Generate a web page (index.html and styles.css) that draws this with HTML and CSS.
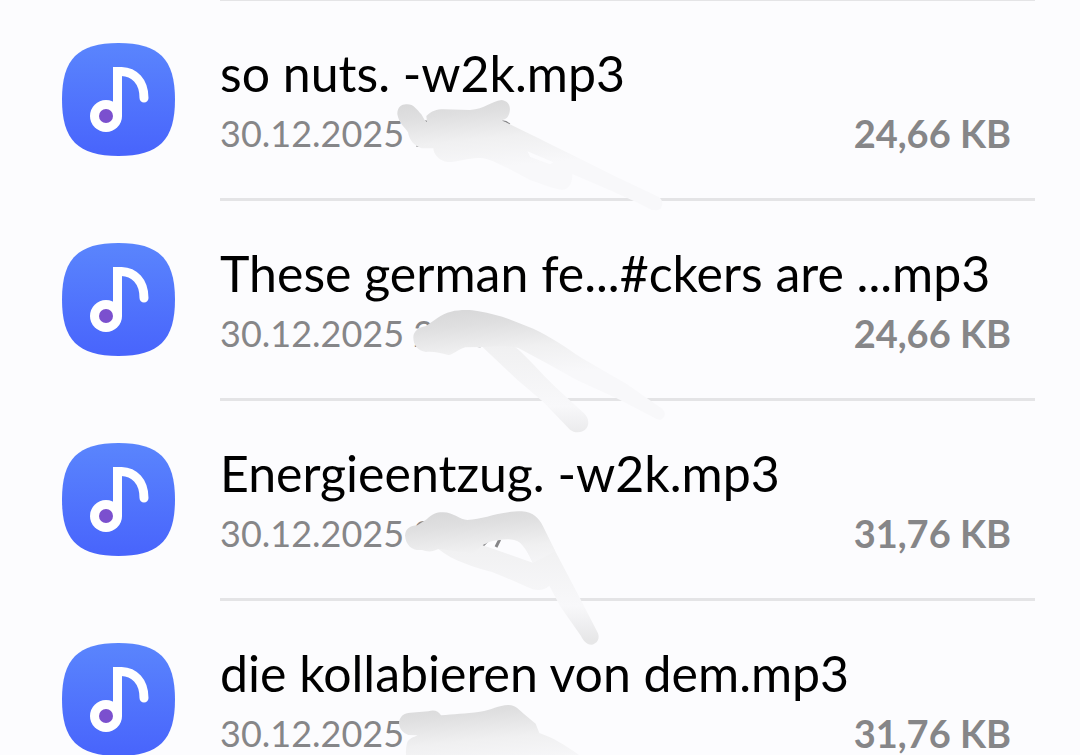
FILE: index.html
```html
<!DOCTYPE html>
<html lang="de">
<head>
	<meta charset="UTF-8">
	<meta name="viewport" content="width=device-width, initial-scale=1">
	<title>Audio</title>
	<link rel="stylesheet" href="styles.css">
</head>
<body>
	<svg class="defs" aria-hidden="true">
		<defs>
			<linearGradient id="blue" x1="0" y1="0" x2="0" y2="1">
				<stop offset="0" stop-color="#5a85fd"/>
				<stop offset="1" stop-color="#4864fc"/>
			</linearGradient>
			<!-- smudge shading, dark at the top and fading out to the bottom -->
			<linearGradient id="fade" gradientUnits="userSpaceOnUse" x1="240" y1="30" x2="260" y2="240">
				<stop offset="0" stop-color="#d9d9da"/>
				<stop offset="0.2" stop-color="#dfdfe0"/>
				<stop offset="0.4" stop-color="#e8e8e9"/>
				<stop offset="0.58" stop-color="#f0f0f1"/>
				<stop offset="1" stop-color="#f8f8fa"/>
			</linearGradient>
			<linearGradient id="tail" gradientUnits="userSpaceOnUse" x1="0" y1="130" x2="0" y2="420">
				<stop offset="0" stop-color="#f0f0f1"/>
				<stop offset="0.65" stop-color="#f8f8fa"/>
				<stop offset="1" stop-color="#e7e7e8"/>
			</linearGradient>
		</defs>
		<symbol id="note" viewBox="0 0 113 113">
			<path fill="url(#blue)" d="M56.500 0C97 0 113 16 113 56.500S97 113 56.500 113 0 97 0 56.500 16 0 56.500 0Z"/>
			<path fill="none" stroke="#fff" stroke-width="9" stroke-linecap="round" d="M55.500 28.500h4C72 29 82 38 82 55"/>
			<path fill="#fff" d="M51 24h9v49h-9z"/>
			<circle cx="44" cy="73" r="16" fill="#fff"/>
			<circle cx="44" cy="73" r="7" fill="#7b50ce"/>
		</symbol>
	</svg>

	<ul class="files">
		<li class="file">
			<svg class="icon" aria-hidden="true"><use href="#note"/></svg>
			<div class="info">
				<a class="name" href="#">so nuts. -w2k.mp3</a>
				<div class="meta">
					<span class="date">30.12.2025</span>
					<span class="size">24,66 KB</span>
				</div>
			</div>
			<svg class="smudge" viewBox="0 0 900 480" aria-hidden="true">
				<path class="mark" d="M136 92l8 7M109 168h9M367 93q12 0 22 10"/>
				<path fill="url(#fade)" d="M52 73C51 50 67 41 82 43C101 43 110 58 124 73L134 90L141 97L139 78C155 63 170 58 190 58L270 60C315 57 333 34 365 30C386 33 392 48 389 65C385 85 375 88 364 91L388 102C445 130 502 158 565 189L705 259L835 320C850 330 849 343 843 355C835 363 824 360 815 360L770 337L700 305L577 252C578 282 564 299 547 299C515 296 487 282 450 270L390 238C350 219 325 204 300 204C270 202 235 216 203 216C179 214 160 193 160 175L125 175C105 168 88 153 84 127C71 108 57 100 52 73Z"/>
				<path fill="#fcfcfe" d="M442 184L520 217L510 223L451 201Z"/>
			</svg>
		</li>
		<li class="file">
			<svg class="icon" aria-hidden="true"><use href="#note"/></svg>
			<div class="info">
				<a class="name" href="#">These german fe...#ckers are ...mp3</a>
				<div class="meta">
					<span class="date">30.12.2025 2</span>
					<span class="size">24,66 KB</span>
				</div>
			</div>
			<svg class="smudge" viewBox="-60 -30 900 480" aria-hidden="true">
				<path class="mark" d="M226 136q7 4 16 3"/>
				<path fill="url(#tail)" d="M190 70L320 120L350 145C380 169 420 217 470 265L552 340C565 352 569 370 560 384C548 400 524 400 510 389L430 306L350 238L250 143Z"/>
				<path fill="url(#fade)" d="M40 112C40 94 56 82 76 79C100 64 123 42 153 35C180 29 211 29 236 34C275 41 310 50 347 65L400 86C450 109 495 140 545 174L680 252L780 322C794 329 797 341 792 351C782 364 773 360 760 352L650 295L530 240L440 190L355 144C318 136 288 140 248 141L196 142C171 149 160 165 145 165C120 160 104 154 78 156C52 152 40 136 40 112Z"/>
			</svg>
		</li>
		<li class="file">
			<svg class="icon" aria-hidden="true"><use href="#note"/></svg>
			<div class="info">
				<a class="name" href="#">Energieentzug. -w2k.mp3</a>
				<div class="meta">
					<span class="date">30.12.2025 2</span>
					<span class="size">31,76 KB</span>
				</div>
			</div>
			<svg class="smudge" viewBox="-30 -30 900 480" aria-hidden="true">
				<path class="mark wide" d="M278 136l14-14M318 141l11-22"/>
				<path fill="url(#tail)" d="M400 130L480 126L497 156L570 295L624 400C630 417 621 431 606 434C590 435 580 422 573 408L510 318L478 257C464 270 448 272 428 268C390 253 351 233 306 216C255 202 190 184 145 147L250 128L285 138L428 188Z"/>
				<path fill="url(#fade)" d="M45 107C46 86 61 77 82 76L110 58C127 40 144 36 160 37C190 37 210 60 232 60C282 59 320 35 395 34C430 36 449 57 459 79L496 154L430 188C418 168 410 148 390 128C370 115 346 117 325 121C305 122 294 128 277 136L250 160L145 147C125 158 109 154 96 150C67 153 48 137 45 107Z"/>
			</svg>
		</li>
		<li class="file">
			<svg class="icon" aria-hidden="true"><use href="#note"/></svg>
			<div class="info">
				<a class="name" href="#">die kollabieren von dem.mp3</a>
				<div class="meta">
					<span class="date">30.12.2025</span>
					<span class="size">31,76 KB</span>
				</div>
			</div>
			<svg class="smudge" viewBox="-30 0 900 480" aria-hidden="true">
				<path fill="url(#fade)" d="M27 97C29 79 43 68 61 68L115 64C135 58 145 65 153 76C190 71 225 72 270 65C305 60 325 46 355 45C380 46 388 61 402 72L437 101L448 129C490 143 525 166 560 190L610 230L60 230C45 205 46 180 51 159C57 145 70 142 83 136L55 135C38 129 27 116 27 97Z"/>
			</svg>
		</li>
	</ul>
</body>
</html>
```

FILE: styles.css
```css
*{box-sizing: border-box;}
body{margin: 0;background: #fcfcfe;font-family: "Lato", "Liberation Sans", sans-serif;color: #000;}
.defs{position: absolute;width: 0;height: 0;}
.files{list-style: none;margin: 0;padding: 0 45px 0 62px;}
.files:before{content: "";display: block;height: 1px;margin-left: 158px;background: #e4e4e6;}
.file{position: relative;display: flex;gap: 45px;}
.icon{flex: none;width: 113px;height: 113px;margin-top: 42px;}
.info{flex: 1;min-width: 0;padding: 42px 24px 35px 0;border-bottom: 3px solid #e4e4e6;}
.name{display: block;font-size: 50px;line-height: 60px;white-space: nowrap;color: #000;text-decoration: none;}
.meta{display: flex;justify-content: space-between;font-size: 36px;line-height: 60px;color: #868688;}
.size{font-size: 38px;font-weight: bold;}
/* wiped-out part of the date line */
.smudge{position: absolute;left: 318px;top: 89px;width: 300px;height: 160px;z-index: 1;pointer-events: none;}
.mark{fill: none;stroke: #868688;stroke-width: 5;}
.wide{stroke-width: 9;}
```
